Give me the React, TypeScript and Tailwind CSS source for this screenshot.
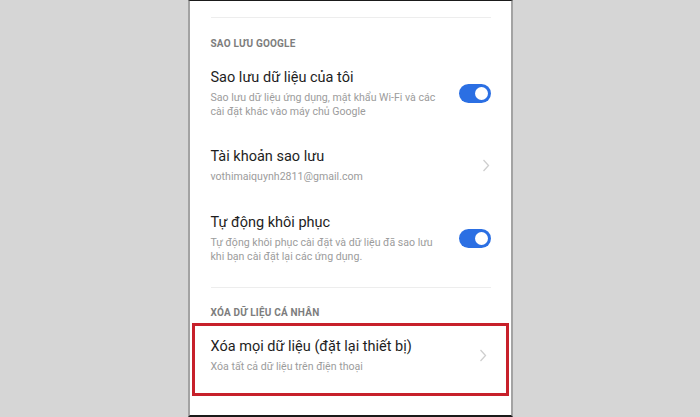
const font = { fontFamily: 'Roboto, "Noto Sans", sans-serif' };

function Toggle() {
  return (
    <div className="w-[32px] h-[19px] rounded-full bg-[#2b6fe3] flex items-center justify-end pr-[3px] shrink-0">
      <div className="w-[13px] h-[13px] rounded-full bg-white" />
    </div>
  );
}

// thin grey chevron like the settings app uses
function Chevron() {
  return (
    <svg width="8" height="13" viewBox="0 0 8 13" className="shrink-0 mr-[1px]">
      <polyline points="1.5,1 6.5,6.5 1.5,12" fill="none" stroke="#cfcfcf" strokeWidth="1.3" />
    </svg>
  );
}

export default function App() {
  return (
    <div className="w-[700px] h-[417px] bg-[#d6d6d6] flex justify-center overflow-hidden" style={font}>
      <div className="w-[325px] h-full bg-white border-x-2 border-x-[#a3a3a3] border-t border-t-[#1a1a1a] border-b-2 border-b-[#1a1a1a] flex flex-col">
        {/* Google backup */}
        <div className="px-[21px] pr-[20px]">
          <div className="h-[16px]" />
          <div className="h-px bg-[#ededed]" />
          <div className="h-[50px] flex items-center text-[10px] font-bold text-[#7d7d7d] tracking-[0.2px]">SAO LƯU GOOGLE</div>

          <div className="flex items-center gap-3">
            <div className="flex-1">
              <p className="text-[14.5px] leading-[20px] text-[#1e1e1e]">Sao lưu dữ liệu của tôi</p>
              <p className="mt-[3px] text-[10.6px] leading-[13.5px] text-[#9c9c9c]">
                Sao lưu dữ liệu ứng dụng, mật khẩu Wi-Fi và các cài đặt khác vào máy chủ Google
              </p>
            </div>
            <Toggle />
          </div>

          <div className="mt-[29px] flex items-center gap-3">
            <div className="flex-1">
              <p className="text-[14.5px] leading-[20px] text-[#1e1e1e]">Tài khoản sao lưu</p>
              <p className="mt-[3px] text-[10.6px] leading-[13px] text-[#9c9c9c]">vothimaiquynh2811@gmail.com</p>
            </div>
            <Chevron />
          </div>

          <div className="mt-[30px] flex items-center gap-3">
            <div className="flex-1">
              <p className="text-[14.5px] leading-[20px] text-[#1e1e1e]">Tự động khôi phục</p>
              <p className="mt-[3px] text-[10.6px] leading-[14px] text-[#9c9c9c]">
                Tự động khôi phục cài đặt và dữ liệu đã sao lưu khi bạn cài đặt lại các ứng dụng.
              </p>
            </div>
            <Toggle />
          </div>

          <div className="mt-[23px] h-px bg-[#ededed]" />
          <div className="pt-[19px] pb-[4px] text-[10px] leading-[12px] font-bold text-[#7d7d7d] tracking-[0.2px]">
            XÓA DỮ LIỆU CÁ NHÂN
          </div>
        </div>

        {/* Factory reset, highlighted */}
        <div className="mx-[2px] h-[73px] border-[3px] border-[#c7202a] pl-[16px] pr-[18px] pt-[11px] flex items-start">
          <div className="flex-1 flex items-center gap-3">
            <div className="flex-1">
              <p className="text-[14.5px] leading-[20px] text-[#1e1e1e]">Xóa mọi dữ liệu (đặt lại thiết bị)</p>
              <p className="mt-[3px] text-[10.6px] leading-[14px] text-[#9c9c9c]">Xóa tất cả dữ liệu trên điện thoại</p>
            </div>
            <Chevron />
          </div>
        </div>
      </div>
    </div>
  );
}
